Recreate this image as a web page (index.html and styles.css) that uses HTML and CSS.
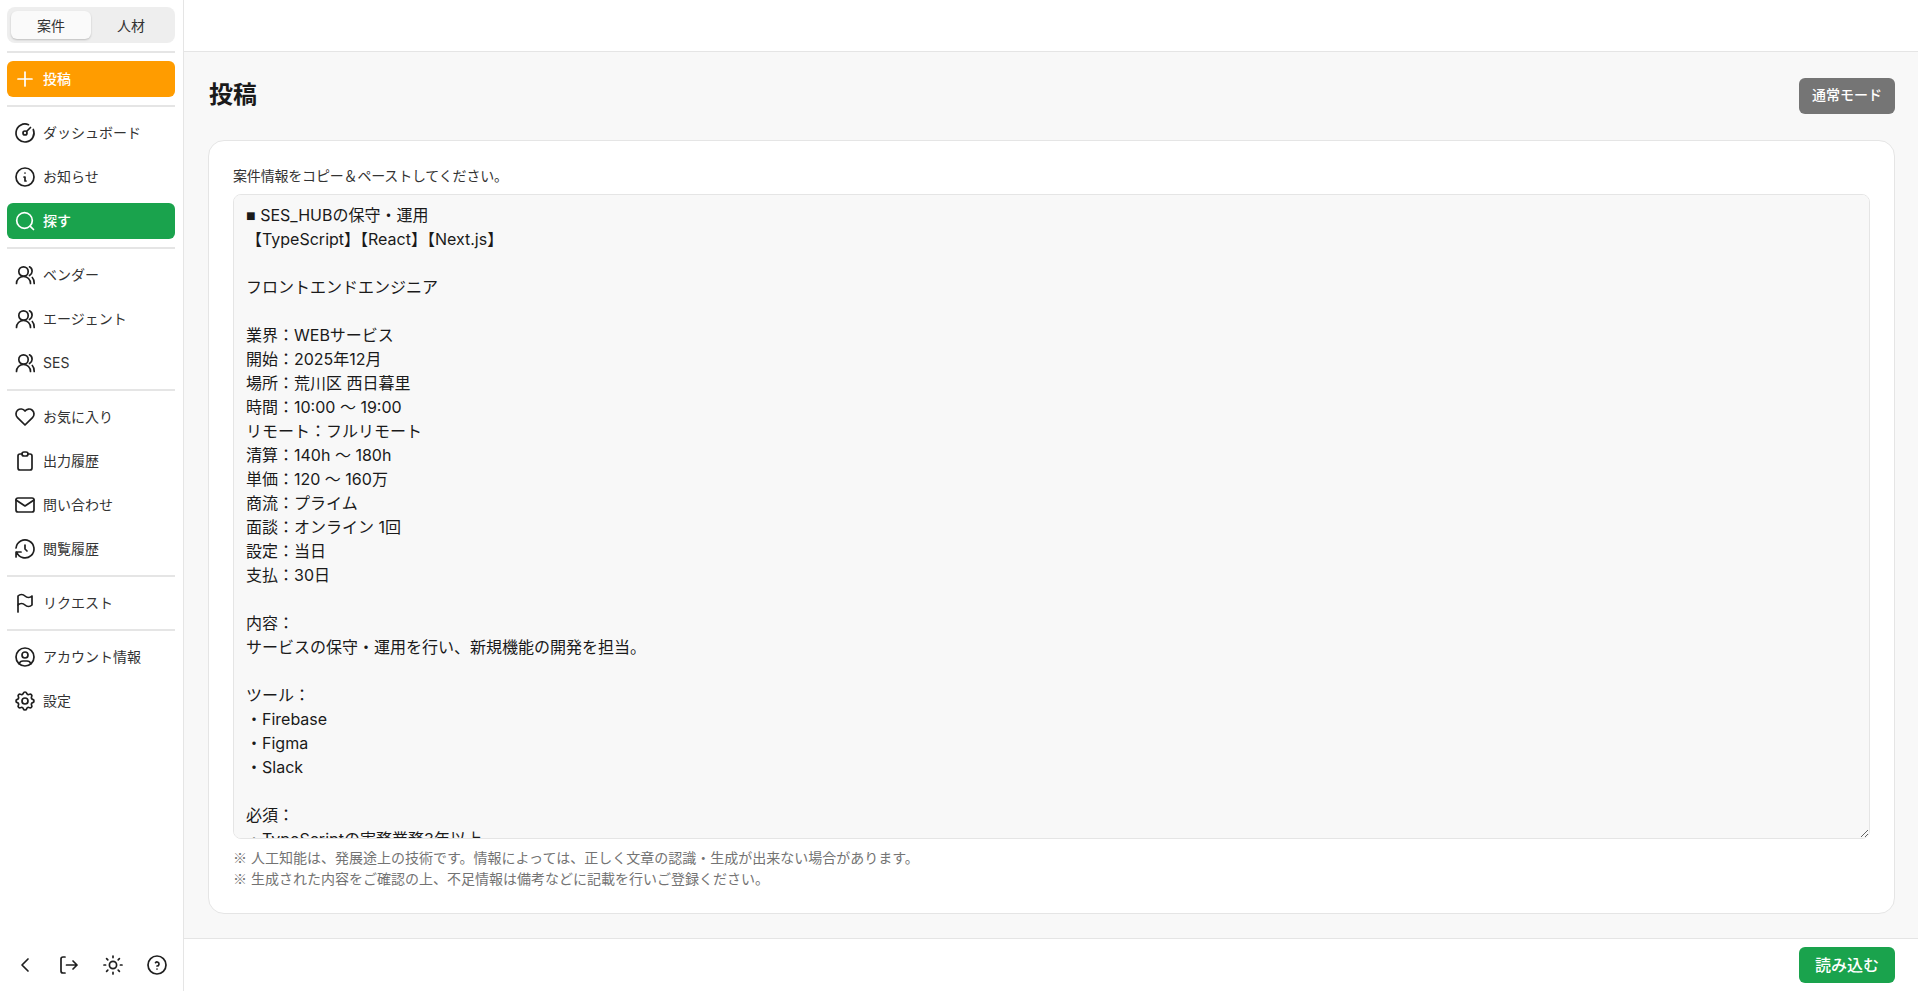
FILE: index.html
```html
<!DOCTYPE html>
<html lang="ja">
<head>
<meta charset="utf-8">
<title>投稿</title>
<link rel="stylesheet" href="styles.css">
</head>
<body>
<div class="app">
  <aside class="sidebar">
    <nav class="nav">
      <div class="tabs">
        <button class="tab tab-active">案件</button>
        <button class="tab">人材</button>
      </div>
      <hr class="rule">
      <a class="item item-post"><svg class="icon" viewBox="0 0 24 24"><path d="M12 5v14M5 12h14"/></svg>投稿</a>
      <hr class="rule">
      <a class="item"><svg class="icon" viewBox="0 0 24 24"><path d="M15.5 3.7A9 9 0 1 0 20.3 8.5"/><circle cx="12" cy="12" r="2"/><path d="M13.5 10.500L17.500 6.500"/></svg>ダッシュボード</a>
      <a class="item"><svg class="icon" viewBox="0 0 24 24"><circle cx="12" cy="12" r="9"/><path d="M12 8h.01M11 12h1v4h1"/></svg>お知らせ</a>
      <a class="item item-active"><svg class="icon" viewBox="0 0 24 24"><circle cx="11.5" cy="11.5" r="7.8"/><path d="M20.5 20.5l-3.4-3.4"/></svg>探す</a>
      <hr class="rule">
      <a class="item"><svg class="icon" viewBox="0 0 24 24"><circle cx="10.5" cy="8.5" r="4.7"/><path d="M3.5 20.5c0-4 3-7 7-7s7 3 7 7M16.5 3.8c1.7.9 2.6 2.5 2.6 4.5s-.9 3.2-2.6 4.2M19.3 14.5c1.3 1.3 1.9 3.2 1.9 6"/></svg>ベンダー</a>
      <a class="item"><svg class="icon" viewBox="0 0 24 24"><circle cx="10.5" cy="8.5" r="4.7"/><path d="M3.5 20.5c0-4 3-7 7-7s7 3 7 7M16.5 3.8c1.7.9 2.6 2.5 2.6 4.5s-.9 3.2-2.6 4.2M19.3 14.5c1.3 1.3 1.9 3.2 1.9 6"/></svg>エージェント</a>
      <a class="item"><svg class="icon" viewBox="0 0 24 24"><circle cx="10.5" cy="8.5" r="4.7"/><path d="M3.5 20.5c0-4 3-7 7-7s7 3 7 7M16.5 3.8c1.7.9 2.6 2.5 2.6 4.5s-.9 3.2-2.6 4.2M19.3 14.5c1.3 1.3 1.9 3.2 1.9 6"/></svg>SES</a>
      <hr class="rule">
      <a class="item"><svg class="icon" viewBox="0 0 24 24"><path d="M19.5 12.572L12 20l-7.5-7.428A5 5 0 1 1 12 6.006a5 5 0 1 1 7.5 6.572"/></svg>お気に入り</a>
      <a class="item"><svg class="icon" viewBox="0 0 24 24"><path d="M9 5H7a2 2 0 0 0-2 2v12a2 2 0 0 0 2 2h10a2 2 0 0 0 2-2V7a2 2 0 0 0-2-2h-2"/><path d="M9 5a2 2 0 0 1 2-2h2a2 2 0 0 1 2 2a2 2 0 0 1-2 2h-2a2 2 0 0 1-2-2z"/></svg>出力履歴</a>
      <a class="item"><svg class="icon" viewBox="0 0 24 24"><path d="M3 7a2 2 0 0 1 2-2h14a2 2 0 0 1 2 2v10a2 2 0 0 1-2 2H5a2 2 0 0 1-2-2V7z"/><path d="M3 7l9 6l9-6"/></svg>問い合わせ</a>
      <a class="item"><svg class="icon" viewBox="0 0 24 24"><path d="M12 8v4l2 2"/><path d="M3.05 11a9 9 0 1 1 .5 4m-.5 5v-5h5"/></svg>閲覧履歴</a>
      <hr class="rule">
      <a class="item"><svg class="icon" viewBox="0 0 24 24"><path d="M5 5a5 5 0 0 1 7 0a5 5 0 0 0 7 0v9a5 5 0 0 1-7 0a5 5 0 0 0-7 0V5z"/><path d="M5 21v-7"/></svg>リクエスト</a>
      <hr class="rule">
      <a class="item"><svg class="icon" viewBox="0 0 24 24"><circle cx="12" cy="12" r="9"/><circle cx="12" cy="10" r="3"/><path d="M6.168 18.849A4 4 0 0 1 10 16h4a4 4 0 0 1 3.832 2.855"/></svg>アカウント情報</a>
      <a class="item"><svg class="icon" viewBox="0 0 24 24"><path d="M10.325 4.317c.426-1.756 2.924-1.756 3.35 0a1.724 1.724 0 0 0 2.573 1.066c1.543-.94 3.31.826 2.37 2.37a1.724 1.724 0 0 0 1.065 2.572c1.756.426 1.756 2.924 0 3.35a1.724 1.724 0 0 0-1.066 2.573c.94 1.543-.826 3.31-2.37 2.37a1.724 1.724 0 0 0-2.572 1.065c-.426 1.756-2.924 1.756-3.35 0a1.724 1.724 0 0 0-2.573-1.066c-1.543.94-3.31-.826-2.37-2.37a1.724 1.724 0 0 0-1.065-2.572c-1.756-.426-1.756-2.924 0-3.35a1.724 1.724 0 0 0 1.066-2.573c-.94-1.543.826-3.31 2.37-2.37c1 .608 2.296.07 2.572-1.065z"/><circle cx="12" cy="12" r="3"/></svg>設定</a>
    </nav>
    <div class="tools">
      <svg class="icon" viewBox="0 0 24 24"><path d="M15 6l-6 6l6 6"/></svg>
      <svg class="icon" viewBox="0 0 24 24"><path d="M8 4H6a2 2 0 0 0-2 2v12a2 2 0 0 0 2 2h2"/><path d="M9.5 12H20M16 8l4 4l-4 4"/></svg>
      <svg class="icon" viewBox="0 0 24 24"><circle cx="12" cy="12" r="3.6"/><path d="M12 3v1.6M12 19.4V21M3 12h1.6M19.4 12H21M5.6 5.6l1.2 1.2M17.2 17.2l1.2 1.2M5.6 18.4l1.2-1.2M17.2 6.8l1.2-1.2"/></svg>
      <svg class="icon" viewBox="0 0 24 24"><circle cx="12" cy="12" r="9"/><path d="M12 16v.01M12 13a2 2 0 0 0 .914-3.782a1.98 1.98 0 0 0-2.414.483"/></svg>
    </div>
  </aside>
  <div class="content">
    <header class="topbar"></header>
    <main class="main">
      <div class="title-row">
        <h1 class="title">投稿</h1>
        <button class="btn btn-gray">通常モード</button>
      </div>
      <section class="card">
        <div class="label" id="source-label">案件情報をコピー＆ペーストしてください。</div>
        <div class="source" role="textbox" aria-multiline="true" aria-labelledby="source-label" contenteditable="true" spellcheck="false"><span class="mark">■</span> SES_HUBの保守・運用
【TypeScript】【React】【Next.js】

フロントエンドエンジニア

業界：WEBサービス
開始：2025年12月
場所：荒川区 西日暮里
時間：10:00 〜 19:00
リモート：フルリモート
清算：140h 〜 180h
単価：120 〜 160万
商流：プライム
面談：オンライン 1回
設定：当日
支払：30日

内容：
サービスの保守・運用を行い、新規機能の開発を担当。

ツール：
・Firebase
・Figma
・Slack

必須：
・TypeScriptの実務業務3年以上
・Reactの実務業務3年以上</div>
        <div class="notes">
          <p><span class="refmark">※</span> 人工知能は、発展途上の技術です。情報によっては、正しく文章の認識・生成が出来ない場合があります。</p>
          <p><span class="refmark">※</span> 生成された内容をご確認の上、不足情報は備考などに記載を行いご登録ください。</p>
        </div>
      </section>
    </main>
    <footer class="footer"><button class="btn btn-green">読み込む</button></footer>
  </div>
</div>
</body>
</html>
```
FILE: styles.css
```css
* { box-sizing: border-box; }
html, body { margin: 0; height: 100%; }
body { font-family: Inter, "Noto Sans CJK JP", sans-serif; color: #1a1a1a; background: #fff; }
.app { display: flex; height: 100vh; overflow: hidden; }
.sidebar { width: 184px; flex: none; display: flex; flex-direction: column; justify-content: space-between; border-right: 1px solid #e5e5e5; padding: 7px 8px 14px 7px; background: #fff; }
.nav { display: flex; flex-direction: column; gap: 8px; }
.rule { width: 100%; height: 2px; margin: 0; border: 0; background: #e5e5e5; }
.tabs { display: flex; height: 36px; padding: 4px; background: #eee; border-radius: 8px; }
.tab { flex: 1; border: 0; background: transparent; border-radius: 6px; font: inherit; font-size: 14px; color: #333; padding: 0 0 1px; }
.tab-active { background: #fafafa; box-shadow: 0 1px 2px rgba(0,0,0,.2); }
.item { display: flex; align-items: center; gap: 6px; height: 36px; padding-left: 6px; border-radius: 6px; font-size: 14px; color: #333; line-height: 32px; }
.item-post { background: #ff9c00; color: #fff; font-weight: 500; }
.item-active { background: #1aa34d; color: #fff; font-weight: 500; }
.icon { width: 24px; height: 24px; flex: none; fill: none; stroke: currentColor; stroke-width: 1.7; stroke-linecap: round; stroke-linejoin: round; color: #1f1f1f; }
.item-post .icon, .item-active .icon { color: #fff; }
.tools { display: flex; gap: 20px; padding-left: 6px; align-items: center; }
.content { flex: 1; min-width: 0; display: flex; flex-direction: column; }
.topbar { height: 52px; flex: none; border-bottom: 1px solid #e5e5e5; background: #fff; }
.main { flex: 1; min-height: 0; display: flex; flex-direction: column; padding: 26px 23px 24px 24px; background: #f8f8f8; gap: 26px; }
.title-row { display: flex; justify-content: space-between; align-items: center; height: 36px; flex: none; }
.title { margin: 0 0 0 1px; font-size: 24px; line-height: 1; padding-bottom: 2px; font-weight: 700; color: #1a1a1a; }
.btn { width: 96px; height: 36px; border: 0; border-radius: 6px; color: #fff; font: inherit; font-weight: 500; line-height: 1; }
.btn-gray { background: #757575; font-size: 14px; padding: 0 0 2px; }
.btn-green { background: #1aa34d; font-size: 16px; padding: 0 0 1px; }
.card { flex: 1; min-height: 0; display: flex; flex-direction: column; padding: 24px; background: #fff; border: 1px solid #e5e5e5; border-radius: 16px; }
.label { font-size: 14px; line-height: 21px; color: #333; margin-bottom: 8px; letter-spacing: -0.18px; }
.source { flex: 1; min-height: 0; width: 100%; padding: 8px 12px; font-size: 16px; line-height: 24px; color: #1a1a1a; background: #f8f8f8; border: 1px solid #e5e5e5; border-radius: 8px; resize: vertical; outline: 0; overflow: auto; white-space: pre-wrap; scrollbar-width: none; }
.mark { font-family: "Liberation Sans", sans-serif; line-height: 1; }
.notes { margin-top: 8px; font-size: 14px; line-height: 21px; color: #737373; }
.notes p { margin: 0; }
.refmark { font-family: "Noto Sans CJK JP", sans-serif; }
.footer { height: 53px; flex: none; display: flex; justify-content: flex-end; align-items: center; padding-right: 23px; border-top: 1px solid #e5e5e5; background: #fff; }
```
